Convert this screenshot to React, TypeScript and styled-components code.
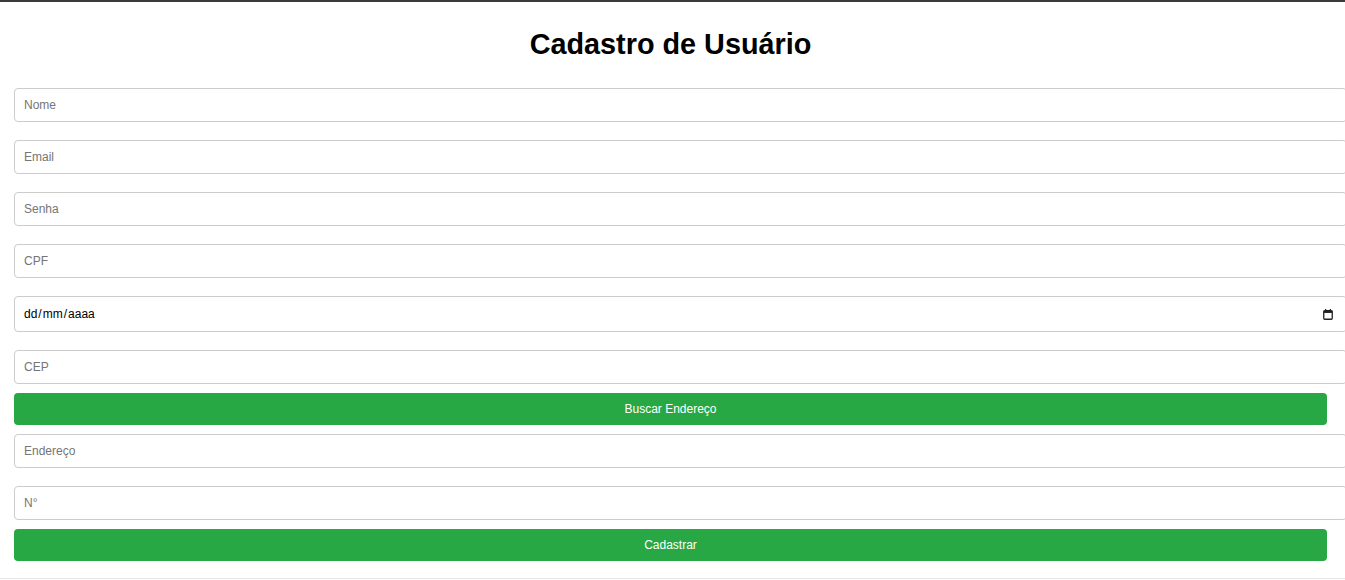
import React from "react";
import styled, { createGlobalStyle } from "styled-components";

const GlobalStyle = createGlobalStyle`
  html, body {
    margin: 0;
    padding: 0;
    background: #ffffff;
    font-family: "Liberation Sans", Arial, sans-serif;
  }
  * { font-family: "Liberation Sans", Arial, sans-serif; }
`;

const TopBar = styled.div`
  height: 2px;
  background: #3a3a3a;
`;

const Container = styled.div`
  padding: 26px 18px 17px 14px;
  border-bottom: 1px solid #e6e6e6;
  overflow: hidden;
`;

const Title = styled.h1`
  margin: 0 0 19px;
  font-size: 28.8px;
  line-height: 32px;
  font-weight: 700;
  color: #000;
  text-align: center;
`;

const Form = styled.form`
  display: flex;
  flex-direction: column;
  align-items: flex-start;
`;

const Field = styled.input`
  box-sizing: content-box;
  width: 100%;
  margin: 9px 0;
  padding: 9px 9px;
  height: 14px;
  font-size: 12px;
  line-height: 14px;
  color: #000;
  border: 1px solid #cccccc;
  border-radius: 4px;
  outline: none;
  background: #fff;
  &::placeholder {
    color: #757575;
  }
`;

const DateBox = styled.div`
  box-sizing: content-box;
  width: 100%;
  margin: 9px 0;
  padding: 0 9px;
  height: 34px;
  border: 1px solid #cccccc;
  border-radius: 4px;
  display: flex;
  align-items: center;
  justify-content: space-between;
  font-size: 12px;
  color: #000;
`;

const DateText = styled.span`
  display: flex;
  align-items: center;
`;

const Sep = styled.span`
  padding: 0 1px;
`;

const CalIcon = styled.svg`
  width: 10px;
  height: 11px;
  margin-right: 4px;
`;

const Button = styled.button`
  width: 100%;
  padding: 9px 0;
  height: 32px;
  border: none;
  border-radius: 4px;
  background: #28a745;
  color: #ffffff;
  font-size: 12px;
  line-height: 14px;
  cursor: pointer;
`;

export default function App() {
  return (
    <>
      <GlobalStyle />
      <TopBar />
      <Container>
        <Title>Cadastro de Usuário</Title>
        <Form onSubmit={(e) => e.preventDefault()}>
          <Field placeholder="Nome" />
          <Field placeholder="Email" />
          <Field placeholder="Senha" type="password" />
          <Field placeholder="CPF" />
          <DateBox>
            <DateText>
              dd<Sep>/</Sep>mm<Sep>/</Sep>aaaa
            </DateText>
            <CalIcon viewBox="0 0 10 11">
              <rect x="0.75" y="1.75" width="8.5" height="8.5" rx="1" fill="none" stroke="#222" strokeWidth="1.3" />
              <rect x="0.75" y="1.75" width="8.5" height="2.2" fill="#222" />
              <rect x="2" y="0" width="1.3" height="2.5" fill="#222" />
              <rect x="6.7" y="0" width="1.3" height="2.5" fill="#222" />
            </CalIcon>
          </DateBox>
          <Field placeholder="CEP" />
          <Button type="button">Buscar Endereço</Button>
          <Field placeholder="Endereço" />
          <Field placeholder="N°" />
          <Button type="submit">Cadastrar</Button>
        </Form>
      </Container>
    </>
  );
}
